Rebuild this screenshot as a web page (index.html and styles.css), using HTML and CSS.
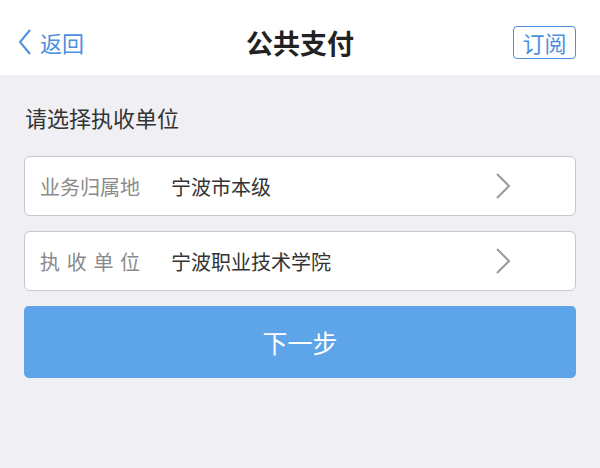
FILE: index.html
```html
<!DOCTYPE html>
<html lang="zh">
<head>
<meta charset="utf-8">
<link rel="stylesheet" href="styles.css">
</head>
<body>
<div class="page">
  <header class="nav">
    <div class="back">
      <svg class="back-icon" width="14" height="26" viewBox="0 0 14 26"><path d="M12 1 L2 13 L12 25" fill="none" stroke="#4a8fe0" stroke-width="2"/></svg>
      <span>返回</span>
    </div>
    <div class="title">公共支付</div>
    <div class="sub">订阅</div>
  </header>
  <main class="content">
    <div class="section-title">请选择执收单位</div>
    <div class="field">
      <span class="label">业务归属地</span>
      <span class="value">宁波市本级</span>
      <svg class="chev" width="16" height="26" viewBox="0 0 16 26"><path d="M2 1 L14 13 L2 25" fill="none" stroke="#9a9a9a" stroke-width="2"/></svg>
    </div>
    <div class="field">
      <span class="label spaced">执收单位</span>
      <span class="value">宁波职业技术学院</span>
      <svg class="chev" width="16" height="26" viewBox="0 0 16 26"><path d="M2 1 L14 13 L2 25" fill="none" stroke="#9a9a9a" stroke-width="2"/></svg>
    </div>
    <button class="next">下一步</button>
  </main>
</div>
</body>
</html>
```
FILE: styles.css
```css
* { box-sizing: border-box; }
html, body { margin: 0; padding: 0; }
body {
  width: 600px;
  height: 468px;
  background: #efeff4;
  font-family: "Noto Sans CJK SC", "Noto Sans", sans-serif;
  overflow: hidden;
}
.nav {
  height: 75px;
  background: #ffffff;
  display: flex;
  align-items: center;
  justify-content: space-between;
  padding: 9px 24px 0 18px;
  position: relative;
}
.back {
  display: flex;
  align-items: center;
  gap: 8px;
  color: #4a8fe0;
  font-size: 22px;
}
.back-icon { display: block; }
.title {
  position: absolute;
  left: 0;
  right: 0;
  text-align: center;
  font-size: 27px;
  font-weight: 700;
  color: #222;
  pointer-events: none;
}
.sub {
  width: 63px;
  height: 33px;
  border: 1.5px solid #4a8fe0;
  border-radius: 4px;
  color: #4a8fe0;
  font-size: 22px;
  display: flex;
  align-items: center;
  justify-content: center;
  line-height: 1;
}
.content {
  padding: 0 24px;
  display: flex;
  flex-direction: column;
}
.section-title {
  font-size: 22px;
  color: #333;
  margin-top: 27px;
  line-height: 30px;
  padding-left: 1px;
}
.field {
  margin-top: 24px;
  height: 60px;
  background: #fff;
  border: 1px solid #c8c8cc;
  border-radius: 6px;
  display: flex;
  align-items: center;
  padding: 0 64px 0 15px;
  font-size: 20px;
}
.field + .field { margin-top: 15px; }
.label {
  width: 131px;
  color: #8a8a8a;
}
.label.spaced { letter-spacing: 6.7px; }
.value {
  flex: 1;
  color: #333;
}
.chev { display: block; }
.next {
  margin-top: 15px;
  height: 72px;
  border: none;
  border-radius: 5px;
  background: #5ea4e8;
  color: #fff;
  font-family: inherit;
  font-size: 25px;
}
```
